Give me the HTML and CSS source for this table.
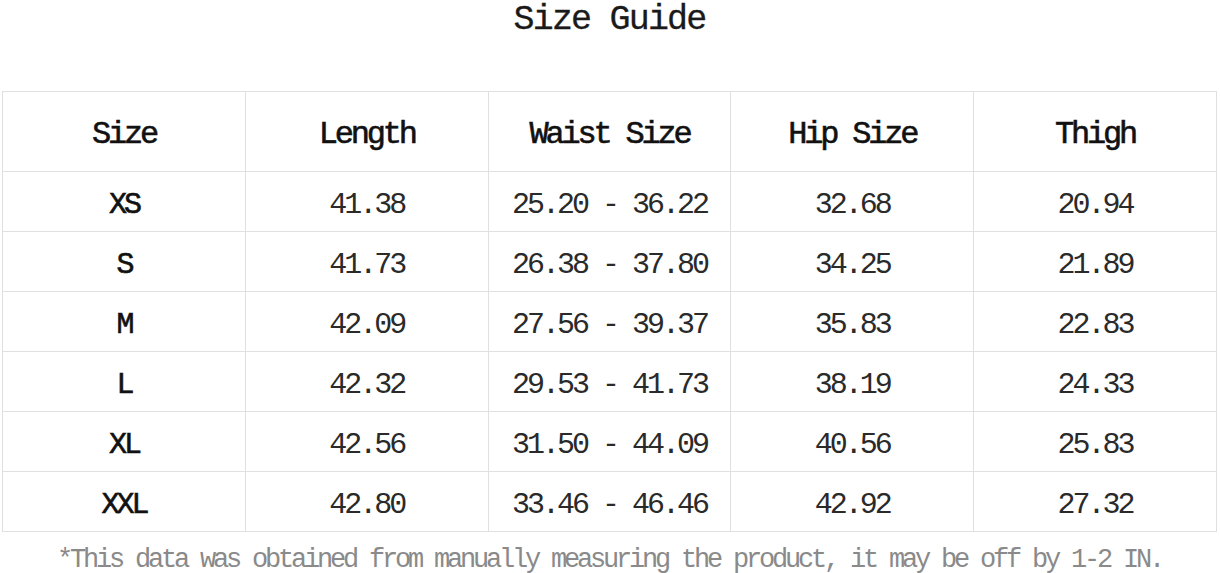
FILE: index.html
```html
<!DOCTYPE html>
<html lang="en">
<head>
<meta charset="utf-8">
<title>Size Guide</title>
<link rel="stylesheet" href="styles.css">
</head>
<body>
<div class="page">
  <h1 class="title">Size Guide</h1>
  <table class="sizes">
    <thead>
      <tr><th>Size</th><th>Length</th><th>Waist Size</th><th>Hip Size</th><th>Thigh</th></tr>
    </thead>
    <tbody>
      <tr><td class="sz">XS</td><td>41.38</td><td>25.20 - 36.22</td><td>32.68</td><td>20.94</td></tr>
      <tr><td class="sz">S</td><td>41.73</td><td>26.38 - 37.80</td><td>34.25</td><td>21.89</td></tr>
      <tr><td class="sz">M</td><td>42.09</td><td>27.56 - 39.37</td><td>35.83</td><td>22.83</td></tr>
      <tr><td class="sz">L</td><td>42.32</td><td>29.53 - 41.73</td><td>38.19</td><td>24.33</td></tr>
      <tr><td class="sz">XL</td><td>42.56</td><td>31.50 - 44.09</td><td>40.56</td><td>25.83</td></tr>
      <tr><td class="sz">XXL</td><td>42.80</td><td>33.46 - 46.46</td><td>42.92</td><td>27.32</td></tr>
    </tbody>
  </table>
  <p class="note">*This data was obtained from manually measuring the product, it may be off by 1-2 IN.</p>
</div>
</body>
</html>
```
FILE: styles.css
```css
html, body {
  margin: 0;
  padding: 0;
  background: #ffffff;
  overflow: hidden;
}
.page {
  width: 1220px;
  height: 573px;
  padding-left: 2px;
  box-sizing: border-box;
  font-family: "Liberation Mono", "DejaVu Sans Mono", monospace;
  color: #222;
}
.title {
  margin: 0;
  width: 1215px;
  text-align: center;
  font-size: 35px;
  font-weight: normal;
  line-height: 40px;
  letter-spacing: -1.8px;
  color: #1a1a1a;
  -webkit-text-stroke: 0.3px #1a1a1a;
}
.sizes {
  margin-top: 51px;
  width: 1215px;
  border-collapse: collapse;
  table-layout: fixed;
}
.sizes th, .sizes td {
  border: 1px solid #e0e0e0;
  text-align: center;
  vertical-align: middle;
  padding: 0;
  white-space: nowrap;
}
.sizes th {
  height: 80px;
  box-sizing: border-box;
  padding-top: 6px;
  font-size: 32px;
  font-weight: normal;
  letter-spacing: -3.2px;
  color: #111;
  -webkit-text-stroke: 0.6px #111;
}
.sizes td {
  height: 60px;
  box-sizing: border-box;
  padding-top: 7px;
  font-size: 30px;
  letter-spacing: -3px;
  color: #2a2a2a;
}
.sizes td.sz {
  color: #111;
  -webkit-text-stroke: 0.6px #111;
}
.note {
  margin: 13px 0 0;
  width: 1215px;
  text-align: center;
  font-size: 27px;
  letter-spacing: -3.2px;
  color: #8a8a8a;
  white-space: nowrap;
}
```
